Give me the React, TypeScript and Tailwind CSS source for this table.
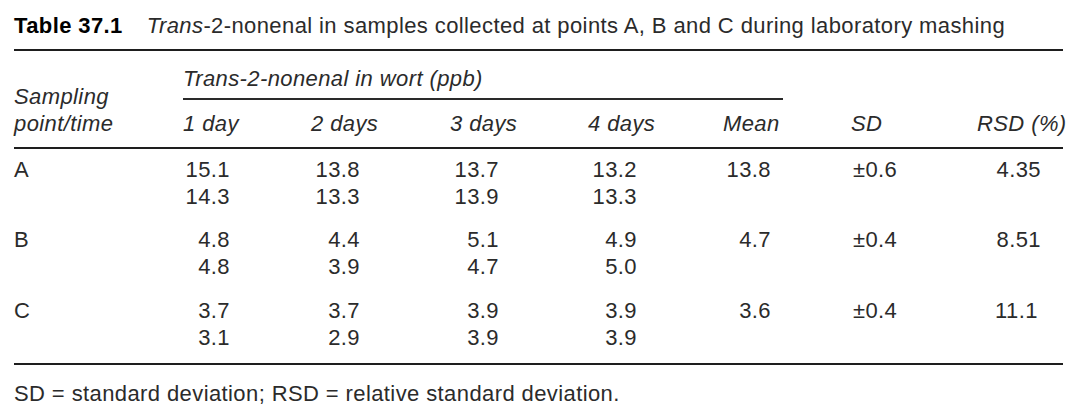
const groups = [
  {
    label: "A",
    rows: [
      ["15.1", "13.8", "13.7", "13.2"],
      ["14.3", "13.3", "13.9", "13.3"],
    ],
    mean: "13.8",
    sd: "±0.6",
    rsd: "4.35",
  },
  {
    label: "B",
    rows: [
      ["4.8", "4.4", "5.1", "4.9"],
      ["4.8", "3.9", "4.7", "5.0"],
    ],
    mean: "4.7",
    sd: "±0.4",
    rsd: "8.51",
  },
  {
    label: "C",
    rows: [
      ["3.7", "3.7", "3.9", "3.9"],
      ["3.1", "2.9", "3.9", "3.9"],
    ],
    mean: "3.6",
    sd: "±0.4",
    rsd: "11.1",
  },
];

const cols = "grid grid-cols-[169px_128px_139px_138px_135px_128px_126px_86px]";

function Num({ children, className = "" }: { children: React.ReactNode; className?: string }) {
  return <div className={`w-[47px] text-right ${className}`}>{children}</div>;
}

export default function App() {
  return (
    <div className="min-h-screen w-[1079px] bg-white px-[14px] pt-[12px] font-['Liberation_Sans',Arial,sans-serif] text-[22px] leading-[27px] tracking-[0.4px] text-[#2b2b2b]">
      {/* caption */}
      <p className="whitespace-nowrap">
        <span className="font-bold text-black">Table 37.1</span>
        <span className="ml-[24px] italic">Trans</span>-2-nonenal in samples collected at points A, B and C during
        laboratory mashing
      </p>

      <div className="mt-[10px] w-[1049px] border-t-2 border-[#1e1e1e]" />

      {/* header */}
      <div className={`${cols} items-start whitespace-nowrap italic`}>
        <div className="row-span-2 flex h-full flex-col justify-end">
          <span>Sampling</span>
          <span>point/time</span>
        </div>
        <div className="col-span-7 pt-[14px]">
          <div>Trans-2-nonenal in wort (ppb)</div>
          <div className="mt-[6px] h-[1.5px] w-[600px] bg-[#2a2a2a]" />
        </div>
        <div className="pt-[10px]">1 day</div>
        <div className="pt-[10px]">2 days</div>
        <div className="pt-[10px]">3 days</div>
        <div className="pt-[10px]">4 days</div>
        <div className="pt-[10px]">Mean</div>
        <div className="pt-[10px]">SD</div>
        <div className="pt-[10px]">RSD (%)</div>
      </div>

      <div className="mt-[10px] w-[1049px] border-t-2 border-[#1e1e1e]" />

      {/* body */}
      <div className="flex flex-col gap-y-[16.5px] pt-[7px]">
        {groups.map((g) => (
          <div key={g.label} className={cols}>
            <div>{g.label}</div>
            {[0, 1, 2, 3].map((c) => (
              <div key={c} className={c === 0 ? "" : "pl-[2px]"}>
                <Num>{g.rows[0][c]}</Num>
                <Num>{g.rows[1][c]}</Num>
              </div>
            ))}
            <div className="pl-[1px]">
              <Num className="w-[45px]">{g.mean}</Num>
            </div>
            <div className="pl-[2px]">{g.sd}</div>
            <div className="pl-[18px]">
              <div className={`w-[46px] text-right ${g.rsd === "11.1" ? "pr-[13px]" : ""}`}>{g.rsd}</div>
            </div>
          </div>
        ))}
      </div>

      <div className="mt-[12px] w-[1049px] border-t-2 border-[#1e1e1e]" />

      <p className="mt-[15px] whitespace-nowrap">SD = standard deviation; RSD = relative standard deviation.</p>
    </div>
  );
}
